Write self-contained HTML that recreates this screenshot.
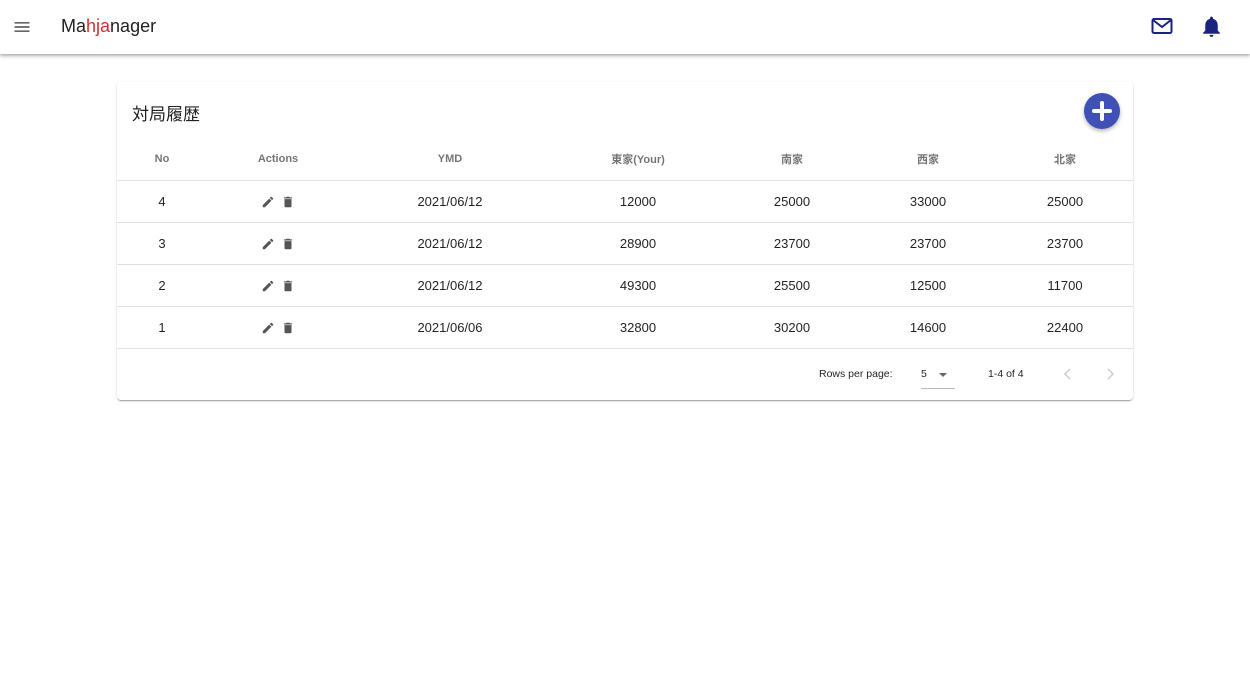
<!DOCTYPE html>
<html><head><meta charset="utf-8"><style>
*{box-sizing:border-box;margin:0;padding:0}
body{width:1250px;height:681px;background:#fff;font-family:"Liberation Sans","Noto Sans CJK JP",sans-serif;color:rgba(0,0,0,.87);position:relative;overflow:hidden}
.bar{position:absolute;left:0;top:0;width:1250px;height:54px;background:#fff;box-shadow:0 2px 4px rgba(0,0,0,.25),0 1px 2px rgba(0,0,0,.15)}
.logo{position:absolute;left:61px;top:16px;font-size:18px;color:#222}
.logo span{color:#d32f2f}
.card{position:absolute;left:117px;top:82px;width:1016px;height:318px;background:#fff;border-radius:4px;box-shadow:0 2px 1px -1px rgba(0,0,0,.2),0 1px 1px rgba(0,0,0,.14),0 1px 3px rgba(0,0,0,.12)}
.title{position:absolute;left:15px;top:18px;font-size:17px;color:#222}
.fab{position:absolute;left:967px;top:11px;width:36px;height:36px;border-radius:50%;background:#3f51b5;box-shadow:0 2px 4px rgba(0,0,0,.3)}
table{position:absolute;left:0;top:56px;border-collapse:collapse;table-layout:fixed;width:1016px}
th{height:42px;font-size:11px;font-weight:600;color:rgba(0,0,0,.55);text-align:center;border-bottom:1px solid #e0e0e0}
td{height:42px;font-size:13px;text-align:center;border-bottom:1px solid #e0e0e0}
.foot{position:absolute;top:266px;left:0;width:1016px;height:52px;font-size:10.5px;color:rgba(0,0,0,.87)}
</style></head><body>
<div class="bar">
<svg style="position:absolute;left:12px;top:17px" width="20" height="20" viewBox="0 0 24 24"><path d="M3 6h18v2H3zM3 11h18v2H3zM3 16h18v2H3z" fill="#666"/></svg>
<div class="logo">Ma<span>hja</span>nager</div>
<svg style="position:absolute;left:1150px;top:14px" width="24" height="24" viewBox="0 0 24 24"><rect x="2.5" y="5" width="19" height="14" rx="1.5" fill="none" stroke="#1a237e" stroke-width="2"/><path d="M3 6l9 7 9-7" fill="none" stroke="#1a237e" stroke-width="2"/></svg>
<svg style="position:absolute;left:1199px;top:14px" width="25" height="25" viewBox="0 0 24 24"><path d="M12 22c1.1 0 2-.9 2-2h-4c0 1.1.9 2 2 2zm6-6v-5c0-3.07-1.640-5.64-4.5-6.32V4c0-.83-.67-1.5-1.5-1.5s-1.5.67-1.5 1.5v.68C7.63 5.36 6 7.92 6 11v5l-2 2v1h16v-1l-2-2z" fill="#1a237e"/></svg>
</div>
<div class="card">
<div class="title">対局履歴</div>
<div class="fab"><svg width="36" height="36" viewBox="0 0 36 36"><path d="M18 10v16M10 18h16" stroke="#fff" stroke-width="4" stroke-linecap="round"/></svg></div>
<table>
<colgroup><col style="width:90px"><col style="width:142px"><col style="width:202px"><col style="width:174px"><col style="width:134px"><col style="width:138px"><col style="width:136px"></colgroup>
<tr><th>No</th><th>Actions</th><th>YMD</th><th>東家(Your)</th><th>南家</th><th>西家</th><th>北家</th></tr>
<tr><td>4</td><td>ACT</td><td>2021/06/12</td><td>12000</td><td>25000</td><td>33000</td><td>25000</td></tr>
<tr><td>3</td><td>ACT</td><td>2021/06/12</td><td>28900</td><td>23700</td><td>23700</td><td>23700</td></tr>
<tr><td>2</td><td>ACT</td><td>2021/06/12</td><td>49300</td><td>25500</td><td>12500</td><td>11700</td></tr>
<tr><td>1</td><td>ACT</td><td>2021/06/06</td><td>32800</td><td>30200</td><td>14600</td><td>22400</td></tr>
</table>
<div class="foot">
<span style="position:absolute;left:702px;top:20px">Rows per page:</span>
<span style="position:absolute;left:804px;top:20px">5</span>
<svg style="position:absolute;left:820px;top:21px" width="12" height="12" viewBox="0 0 12 12"><path d="M2 4h8l-4 4z" fill="#666"/></svg>
<div style="position:absolute;left:804px;top:40px;width:34px;height:1px;background:#bbb"></div>
<span style="position:absolute;left:871px;top:20px">1-4 of 4</span>
<svg style="position:absolute;left:944px;top:19px" width="14" height="14" viewBox="0 0 14 14"><path d="M9 2L4 7l5 5" fill="none" stroke="#ccc" stroke-width="1.5"/></svg>
<svg style="position:absolute;left:986px;top:19px" width="14" height="14" viewBox="0 0 14 14"><path d="M5 2l5 5-5 5" fill="none" stroke="#ccc" stroke-width="1.5"/></svg>
</div>
</div>
<script>
document.querySelectorAll('td').forEach(function(t){if(t.textContent==='ACT'){t.innerHTML='<svg width="14" height="14" viewBox="0 0 24 24" style="vertical-align:middle;margin-right:6px"><path d="M3 17.25V21h3.75L17.81 9.94l-3.75-3.75L3 17.25zM20.71 7.04a1 1 0 000-1.410l-2.34-2.34a1 1 0 00-1.41 0l-1.83 1.83 3.75 3.75 1.83-1.83z" fill="#555"/></svg><svg width="14" height="14" viewBox="0 0 24 24" style="vertical-align:middle"><path d="M6 19c0 1.1.9 2 2 2h8c1.1 0 2-.9 2-2V7H6v12zM19 4h-3.5l-1-1h-5l-1 1H5v2h14V4z" fill="#555"/></svg>';}});
</script>
</body></html>
